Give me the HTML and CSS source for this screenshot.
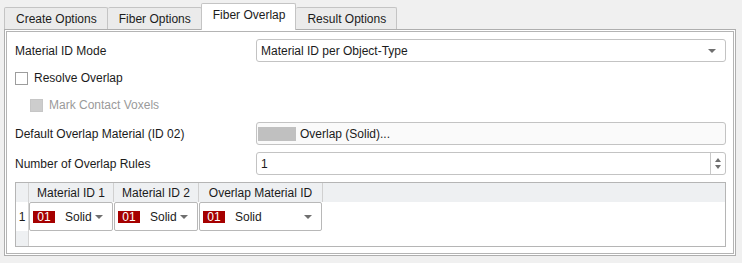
FILE: index.html
```html
<!DOCTYPE html>
<html lang="en">
<head>
  <meta charset="UTF-8" />
  <title>Fiber Overlap</title>
  <link rel="stylesheet" href="styles.css">
</head>
<body>

<div class="tabs">
  <div class="tab">Create Options</div>
  <div class="tab">Fiber Options</div>
  <div class="tab tab-active">Fiber Overlap</div>
  <div class="tab">Result Options</div>
</div>

<div class="pane">
  <div class="page">
    <div class="row">
      <div class="label">Material ID Mode</div>
      <div class="combo">
        <span>Material ID per Object-Type</span>
        <span class="arrow"></span>
      </div>
    </div>

    <div class="row row-check">
      <label class="check"><span class="box"></span>Resolve Overlap</label>
    </div>

    <div class="row row-sub">
      <label class="check check-disabled"><span class="box"></span>Mark Contact Voxels</label>
    </div>

    <div class="row row-btn">
      <div class="label">Default Overlap Material (ID 02)</div>
      <div class="mat-button">
        <span class="swatch"></span>
        <span>Overlap (Solid)...</span>
      </div>
    </div>

    <div class="row row-spin">
      <div class="label">Number of Overlap Rules</div>
      <div class="spin">
        <span class="spin-value">1</span>
        <span class="spin-btns">
          <span class="up"></span>
          <span class="down"></span>
        </span>
      </div>
    </div>

    <div class="rules">
      <div class="rules-head">
        <div class="corner"></div>
        <div class="hcell col-id">Material ID 1</div>
        <div class="hcell col-id">Material ID 2</div>
        <div class="hcell col-ov">Overlap Material ID</div>
        <div class="hfill"></div>
      </div>
      <div class="rules-row">
        <div class="rownum">1</div>
        <div class="cell col-id">
          <div class="mat-combo"><span class="badge">01</span><span class="mat-name">Solid</span><span class="arrow"></span></div>
        </div>
        <div class="cell col-id">
          <div class="mat-combo"><span class="badge">01</span><span class="mat-name">Solid</span><span class="arrow"></span></div>
        </div>
        <div class="cell col-ov">
          <div class="mat-combo"><span class="badge">01</span><span class="mat-name">Solid</span><span class="arrow"></span></div>
        </div>
      </div>
      <div class="rules-rest">
        <div class="rownum rownum-empty"></div>
      </div>
    </div>
  </div>
</div>

</body>
</html>
```

FILE: styles.css
```css
body {
  margin: 0;
  background: #f0f0f0;
  font-family: "Liberation Sans", Arial, sans-serif;
  font-size: 12px;
  color: #1b1b1b;
}

/* tab bar */
.tabs {
  display: flex;
  align-items: flex-end;
  height: 29px;
  padding-left: 4px;
}

.tab {
  height: 21px;
  line-height: 22px;
  padding: 0 10px 0 11px;
  background: #ebebeb;
  border: 1px solid #c4c4c4;
  border-bottom: none;
  border-left: none;
  border-radius: 2px 2px 0 0;
}

.tab:first-child {
  border-left: 1px solid #c4c4c4;
}

.tab-active {
  position: relative;
  z-index: 1;
  height: 26px;
  line-height: 23px;
  margin-bottom: -1px;
  background: #fff;
  border-left: 1px solid #c4c4c4;
  margin-left: -1px;
}

/* tab pane, double frame */
.pane {
  margin: 0 4px 0 4px;
  width: 732px;
  height: 227px;
  border: 1px solid #aeaeae;
  background: #fff;
  padding: 1px;
  box-sizing: border-box;
}

.page {
  height: 100%;
  box-sizing: border-box;
  border: 1px solid #b4b4b4;
  padding: 0 7px 0 8px;
}

.row {
  display: flex;
  align-items: center;
  height: 23px;
  margin-top: 7px;
}

.row-check { height: 24px; margin-top: 4px; }
.row-sub { height: 24px; margin-top: 3px; padding-left: 15px; }
.row-btn { margin-top: 5px; }
.row-spin { margin-top: 7px; }

.label {
  width: 241px;
  flex-shrink: 0;
}

.combo, .mat-button, .spin {
  flex: 1;
  height: 23px;
  box-sizing: border-box;
  border: 1px solid #c3c3c3;
  border-radius: 3px;
  display: flex;
  align-items: center;
}

.combo {
  padding: 0 9px 0 4px;
  justify-content: space-between;
}

.arrow {
  width: 0;
  height: 0;
  border-left: 4px solid transparent;
  border-right: 4px solid transparent;
  border-top: 4px solid #6f6f6f;
}

.mat-button {
  background: #fafafa;
  padding-left: 1px;
}

.swatch {
  width: 38px;
  height: 14px;
  background: #c0c0c0;
  margin-right: 4px;
}

.spin {
  padding-left: 4px;
  justify-content: space-between;
}

.spin-btns {
  width: 14px;
  height: 100%;
  border-left: 1px solid #c8c8c8;
  display: flex;
  flex-direction: column;
  align-items: center;
  justify-content: center;
  gap: 3px;
}

.spin-btns .up {
  border-left: 3px solid transparent;
  border-right: 3px solid transparent;
  border-bottom: 4px solid #6f6f6f;
}

.spin-btns .down {
  border-left: 3px solid transparent;
  border-right: 3px solid transparent;
  border-top: 4px solid #6f6f6f;
}

/* checkboxes */
.check {
  display: flex;
  align-items: center;
}

.box {
  width: 11px;
  height: 11px;
  border: 1px solid #9d9d9d;
  background: #fff;
  margin-right: 6px;
}

.check-disabled {
  color: #9a9a9a;
}

.check-disabled .box {
  background: #cdcdcd;
  border-color: #c6c6c6;
}

/* overlap rules table */
.rules {
  margin-top: 7px;
  height: 65px;
  border: 1px solid #b5b5b5;
  box-sizing: border-box;
  display: flex;
  flex-direction: column;
}

.rules-head {
  display: flex;
  height: 19px;
  background: #eef0f2;
}

.corner {
  width: 12px;
  border-right: 1px solid #d4d4d4;
}

.hcell {
  display: flex;
  align-items: center;
  justify-content: center;
  border-right: 1px solid #d0d0d0;
  background: #eef0f2;
}

.col-id { width: 84px; }
.col-ov { width: 123px; }

.hfill { flex: 1; }

.rules-row {
  display: flex;
  height: 29px;
}

.rownum {
  width: 12px;
  border-right: 1px solid #d4d4d4;
  display: flex;
  align-items: center;
  justify-content: center;
}

.cell {
  padding-right: 1px;
}

.mat-combo {
  height: 29px;
  box-sizing: border-box;
  border: 1px solid #b8b8b8;
  border-radius: 2px;
  display: flex;
  align-items: center;
  padding: 0 9px 0 3px;
}

.badge {
  width: 22px;
  height: 12px;
  line-height: 12px;
  text-align: center;
  background: #a50000;
  color: #fff;
}

.mat-name {
  flex: 1;
  padding-left: 10px;
}

.rules-rest {
  flex: 1;
  display: flex;
}

.rownum-empty {
  background: #eef0f2;
}
```
